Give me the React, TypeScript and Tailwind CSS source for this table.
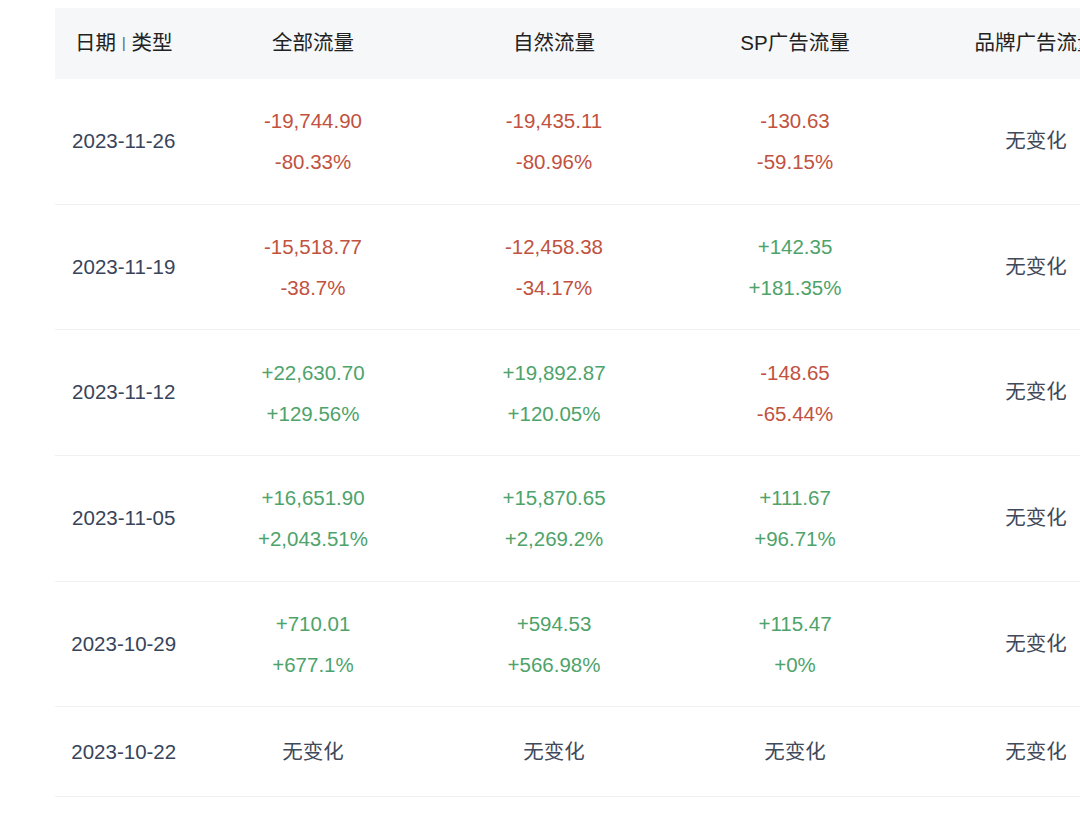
import React from 'react';

type Cell = { v: string; p: string } | null;

const rows: { date: string; cells: Cell[] }[] = [
  { date: '2023-11-26', cells: [{ v: '-19,744.90', p: '-80.33%' }, { v: '-19,435.11', p: '-80.96%' }, { v: '-130.63', p: '-59.15%' }, null] },
  { date: '2023-11-19', cells: [{ v: '-15,518.77', p: '-38.7%' }, { v: '-12,458.38', p: '-34.17%' }, { v: '+142.35', p: '+181.35%' }, null] },
  { date: '2023-11-12', cells: [{ v: '+22,630.70', p: '+129.56%' }, { v: '+19,892.87', p: '+120.05%' }, { v: '-148.65', p: '-65.44%' }, null] },
  { date: '2023-11-05', cells: [{ v: '+16,651.90', p: '+2,043.51%' }, { v: '+15,870.65', p: '+2,269.2%' }, { v: '+111.67', p: '+96.71%' }, null] },
  { date: '2023-10-29', cells: [{ v: '+710.01', p: '+677.1%' }, { v: '+594.53', p: '+566.98%' }, { v: '+115.47', p: '+0%' }, null] },
];

const headers = ['全部流量', '自然流量', 'SP广告流量', '品牌广告流量'];

const font = { fontFamily: '"Liberation Sans", "Noto Sans CJK SC", sans-serif' };

const NoChange = () => <span className="text-[#3f4959]">无变化</span>;

const ValueCell = ({ c }: { c: Cell }) => {
  if (!c) return <NoChange />;
  const up = c.v.startsWith('+');
  const color = up ? 'text-[#4ea36b]' : 'text-[#c1523f]';
  return (
    <div className={`flex flex-col items-center leading-[41px] ${color}`}>
      <span>{c.v}</span>
      <span>{c.p}</span>
    </div>
  );
};

export default function App() {
  return (
    <div className="w-[1080px] h-[837px] bg-white overflow-hidden pl-[55px] pt-[8px] text-[20.5px]" style={font}>
      <div className="w-[1102px]">
        <div className="flex h-[71px] bg-[#f6f7f9] text-[#222]">
          <div className="w-[137.5px] shrink-0 flex items-center justify-center">
            日期<span className="mx-[6px] text-[14px] text-[#555]">|</span>类型
          </div>
          {headers.map((h) => (
            <div key={h} className="w-[241px] shrink-0 flex items-center justify-center whitespace-nowrap">
              {h}
            </div>
          ))}
        </div>
        {rows.map((r) => (
          <div key={r.date} className="flex h-[125.7px] border-b border-[#eef0f2]">
            <div className="w-[137.5px] shrink-0 flex items-center justify-center text-[#38445a]">{r.date}</div>
            {r.cells.map((c, i) => (
              <div key={i} className="w-[241px] shrink-0 flex items-center justify-center">
                <ValueCell c={c} />
              </div>
            ))}
          </div>
        ))}
        <div className="flex h-[90px] border-b border-[#eef0f2]">
          <div className="w-[137.5px] shrink-0 flex items-center justify-center text-[#38445a]">2023-10-22</div>
          {[0, 1, 2, 3].map((i) => (
            <div key={i} className="w-[241px] shrink-0 flex items-center justify-center">
              <NoChange />
            </div>
          ))}
        </div>
      </div>
    </div>
  );
}
